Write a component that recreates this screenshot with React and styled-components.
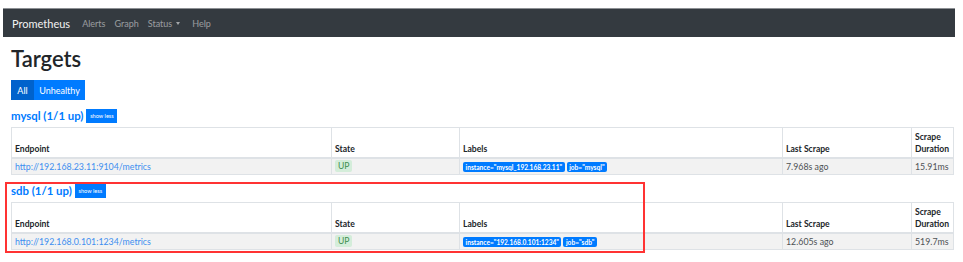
import React from "react";
import styled, { createGlobalStyle } from "styled-components";

const GlobalStyle = createGlobalStyle`
  html, body { background: #fff; }
  body {
    margin: 0;
    padding: 8px 8px 0 3px;
    min-height: 262px;
    font-family: Lato, "Open Sans", Arial, sans-serif;
    color: #212529;
  }
  * { box-sizing: border-box; }
`;

const Navbar = styled.nav`
  height: 29px;
  background: #343a40;
  border-top: 1px solid #8d9094;
  display: flex;
  align-items: center;
  padding-left: 9px;
`;

const Brand = styled.span`
  font-size: 11px;
  color: #f2f2f2;
  margin-right: 12px;
`;

const NavLink = styled.span`
  font-size: 9px;
  color: rgba(255, 255, 255, 0.5);
  margin-right: ${(p) => p.$gap || 9}px;
  display: inline-flex;
  align-items: center;
`;

const Caret = styled.span`
  display: inline-block;
  margin-left: 4px;
  border-top: 3px solid rgba(255, 255, 255, 0.55);
  border-left: 2.5px solid transparent;
  border-right: 2.5px solid transparent;
`;

const Container = styled.main`
  padding: 0 0 12px 8px;
  width: 949px;
`;

const Title = styled.h1`
  font-size: 22px;
  font-weight: 600;
  line-height: 28px;
  margin: 8px 0 0;
`;

const ButtonGroup = styled.div`
  display: flex;
  margin-top: 7px;
`;

const FilterButton = styled.button`
  height: 20px;
  border: none;
  width: ${(p) => p.$w}px;
  padding: 0;
  background: ${(p) => (p.$active ? "#0062cc" : "#007bff")};
  color: #fff;
  font-family: inherit;
  font-size: 9px;
`;

const Section = styled.section`
  position: relative;
  padding-top: ${(p) => p.$top}px;
`;

const Heading = styled.div`
  display: flex;
  align-items: center;
  height: 15px;
  margin-bottom: 4px;
`;

const JobName = styled.span`
  font-size: 11.4px;
  font-weight: 700;
  color: #007bff;
  margin-right: 3px;
`;

const SmallButton = styled.button`
  height: 14px;
  width: 31px;
  border: none;
  padding: 0;
  background: #007bff;
  color: #fff;
  font-family: inherit;
  font-size: 5.6px;
`;

const Table = styled.table`
  width: 942px;
  border-collapse: collapse;
  table-layout: fixed;
  font-size: 8.8px;
`;

const Th = styled.th`
  border: 1px solid #dee2e6;
  border-bottom: 2px solid #dee2e6;
  height: 30px;
  padding: 2px 3px 2px;
  text-align: left;
  vertical-align: bottom;
  font-weight: 700;
  line-height: 12px;
  font-size: 8.6px;
`;

const Td = styled.td`
  border: 1px solid #dee2e6;
  background: #f2f2f2;
  height: 17px;
  padding: 0 3px;
  vertical-align: middle;
  color: ${(p) => (p.$muted ? "#4d5154" : "#212529")};
  white-space: nowrap;
`;

const Link = styled.a`
  color: #3d8ef0;
  text-decoration: none;
`;

const StateBadge = styled.span`
  display: inline-block;
  background: #d4edda;
  color: #3f8f4f;
  border-radius: 2px;
  padding: 0 3px;
  line-height: 12px;
  font-size: 8.6px;
`;

const LabelBadge = styled.span`
  display: inline-block;
  background: #007bff;
  color: #fff;
  font-weight: 700;
  font-size: 6.6px;
  line-height: 10px;
  padding: 0 2.5px;
  border-radius: 2px;
  margin-right: 2px;
`;

const Highlight = styled.div`
  position: absolute;
  left: -6px;
  top: 7px;
  width: 640px;
  height: 71px;
  border: 2px solid #f33;
  pointer-events: none;
`;

const cols = [320, 128, 323, 129, 42];

function TargetTable({ endpoint, labels, scrape, duration }) {
  return (
    <Table>
      <colgroup>
        {cols.map((w, i) => (
          <col key={i} style={{ width: w }} />
        ))}
      </colgroup>
      <thead>
        <tr>
          <Th>Endpoint</Th>
          <Th>State</Th>
          <Th>Labels</Th>
          <Th>Last Scrape</Th>
          <Th>
            Scrape
            <br />
            Duration
          </Th>
        </tr>
      </thead>
      <tbody>
        <tr>
          <Td>
            <Link>{endpoint}</Link>
          </Td>
          <Td>
            <StateBadge>UP</StateBadge>
          </Td>
          <Td>
            {labels.map((l) => (
              <LabelBadge key={l}>{l}</LabelBadge>
            ))}
          </Td>
          <Td $muted>{scrape}</Td>
          <Td $muted>{duration}</Td>
        </tr>
      </tbody>
    </Table>
  );
}

export default function App() {
  return (
    <>
      <GlobalStyle />
      <Navbar>
        <Brand>Prometheus</Brand>
        <NavLink>Alerts</NavLink>
        <NavLink>Graph</NavLink>
        <NavLink $gap={12}>
          Status
          <Caret />
        </NavLink>
        <NavLink>Help</NavLink>
      </Navbar>
      <Container>
        <Title>Targets</Title>
        <ButtonGroup>
          <FilterButton $active $w={23}>All</FilterButton>
          <FilterButton $w={51}>Unhealthy</FilterButton>
        </ButtonGroup>
        <Section $top={8}>
          <Heading>
            <JobName>mysql (1/1 up)</JobName>
            <SmallButton>show less</SmallButton>
          </Heading>
          <TargetTable
            endpoint="http://192.168.23.11:9104/metrics"
            labels={['instance="mysql_192.168.23.11"', 'job="mysql"']}
            scrape="7.968s ago"
            duration="15.91ms"
          />
        </Section>
        <Section $top={8}>
          <Highlight />
          <Heading>
            <JobName>sdb (1/1 up)</JobName>
            <SmallButton>show less</SmallButton>
          </Heading>
          <TargetTable
            endpoint="http://192.168.0.101:1234/metrics"
            labels={['instance="192.168.0.101:1234"', 'job="sdb"']}
            scrape="12.605s ago"
            duration="519.7ms"
          />
        </Section>
      </Container>
    </>
  );
}
